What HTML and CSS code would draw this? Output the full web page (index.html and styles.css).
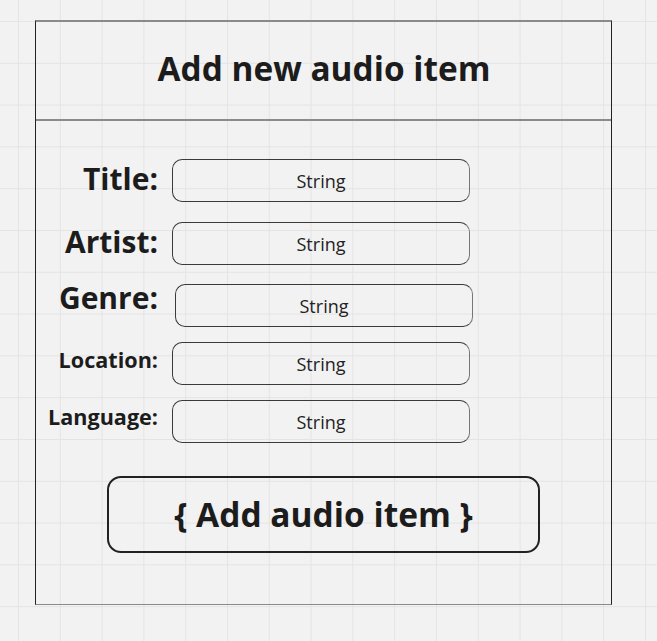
FILE: index.html
```html
<!DOCTYPE html>
<html lang="en">
<head>
<meta charset="utf-8">
<title>Add new audio item</title>
<link rel="stylesheet" href="styles.css">
</head>
<body>
<div class="frame">
  <div class="header">
    <h1 class="heading">Add new audio item</h1>
  </div>
  <div class="form">
    <div class="row row-title">
      <span class="label label-lg">Title:</span>
      <div class="field">String</div>
    </div>
    <div class="row row-artist">
      <span class="label label-lg">Artist:</span>
      <div class="field">String</div>
    </div>
    <div class="row row-genre">
      <span class="label label-lg">Genre:</span>
      <div class="field field-shift">String</div>
    </div>
    <div class="row row-location">
      <span class="label label-sm">Location:</span>
      <div class="field">String</div>
    </div>
    <div class="row row-language">
      <span class="label label-sm">Language:</span>
      <div class="field">String</div>
    </div>
    <div class="actions">
      <div class="button">{ Add audio item }</div>
    </div>
  </div>
</div>
</body>
</html>
```
FILE: styles.css
```css
html, body {
  margin: 0;
  padding: 0;
}
body {
  width: 657px;
  height: 641px;
  overflow: hidden;
  background-color: #f2f2f2;
  background-image:
    linear-gradient(to right, #e4e4e4 1px, transparent 1px),
    linear-gradient(to bottom, #e4e4e4 1px, transparent 1px);
  background-size: 41.8px 41.8px;
  background-position: 18px 21px;
  font-family: "Open Sans", "Noto Sans", sans-serif;
  color: #1c1c1c;
  padding-top: 20px;
  box-sizing: border-box;
}
.frame {
  margin-left: 35px;
  width: 577px;
  height: 585px;
  box-sizing: border-box;
  border-left: 1px solid #222;
  border-right: 1px solid #222;
  border-top: 2px solid #8a8a8a;
  border-bottom: 1px solid #8a8a8a;
}
.header {
  height: 97px;
  border-bottom: 2px solid #8a8a8a;
  display: flex;
  align-items: center;
  justify-content: center;
}
.heading {
  margin: 0 0 3px 0;
  font-size: 33.4px;
  font-weight: 700;
  line-height: 1;
  padding-left: 1px;
}
.form {
  display: flex;
  flex-direction: column;
  padding-top: 38px;
}
.row {
  display: flex;
  align-items: center;
}
.label {
  width: 122px;
  text-align: right;
  font-weight: 700;
  line-height: 1;
  white-space: nowrap;
}
.label-lg {
  font-size: 30px;
}
.label-sm {
  font-size: 21.6px;
}
.field {
  margin-left: 14px;
  width: 298px;
  height: 43px;
  box-sizing: border-box;
  border: 1px solid #3a3a3a;
  border-right-color: #777;
  border-radius: 10px;
  display: flex;
  align-items: center;
  justify-content: center;
  font-size: 18px;
  color: #222;
}
.field-shift {
  margin-left: 17px;
}
.row-title .label { margin-top: -3px; }
.row-artist { margin-top: 20px; }
.row-artist .label { margin-top: -4px; }
.row-genre { margin-top: 19px; }
.row-genre .label { margin-top: -16px; }
.row-location { margin-top: 15px; }
.row-location .label { margin-top: -8px; }
.row-language { margin-top: 15px; }
.row-language .label { margin-top: -10px; }
.actions {
  margin-top: 33px;
  padding-left: 71px;
}
.button {
  width: 433px;
  height: 77px;
  box-sizing: border-box;
  border: 2px solid #222;
  border-radius: 14px;
  display: flex;
  align-items: center;
  justify-content: center;
  font-size: 33.5px;
  font-weight: 700;
  line-height: 1;
}
```
